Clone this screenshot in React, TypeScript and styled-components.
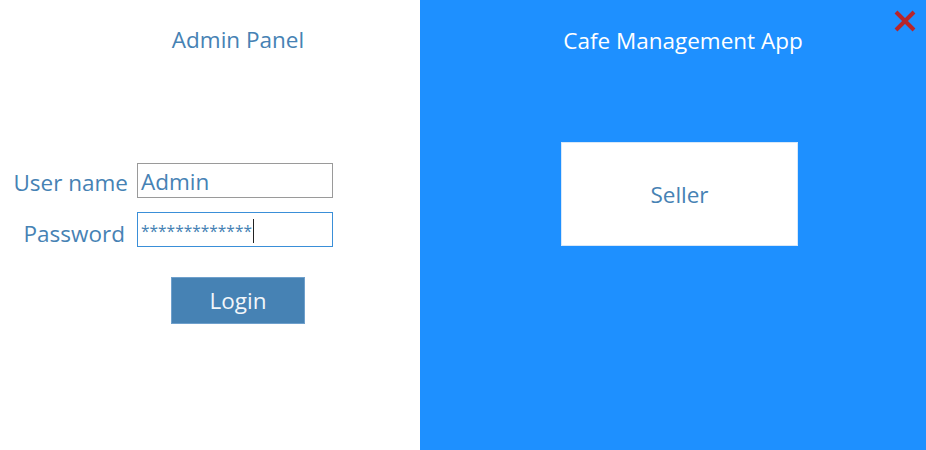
import React from "react";
import styled, { createGlobalStyle } from "styled-components";

const Global = createGlobalStyle`
  html, body { margin: 0; padding: 0; background: #ffffff; }
  body { font-family: "Open Sans", "Liberation Sans", Arial, sans-serif; }
  * { box-sizing: border-box; }
`;

const Frame = styled.div`
  display: flex;
  width: 926px;
  height: 450px;
  overflow: hidden;
`;

const LeftPanel = styled.div`
  width: 420px;
  background: #ffffff;
  display: flex;
  flex-direction: column;
  align-items: center;
  padding-top: 23px;
`;

const RightPanel = styled.div`
  position: relative;
  flex: 1;
  background: #1e90ff;
  display: flex;
  flex-direction: column;
  align-items: center;
  padding-top: 24px;
`;

const Title = styled.div<{ $light?: boolean }>`
  font-size: 22.5px;
  line-height: 34px;
  color: ${(p) => (p.$light ? "#ffffff" : "#4682b4")};
  margin-left: ${(p) => (p.$light ? "20px" : "56px")};
`;

const Form = styled.div`
  align-self: flex-start;
  display: grid;
  grid-template-columns: 128px 196px;
  grid-auto-rows: 35px;
  column-gap: 9px;
  row-gap: 14px;
  margin-top: 106px;
  align-items: center;
`;

const Label = styled.label<{ $pad?: number; $drop?: number }>`
  font-size: 22.5px;
  line-height: 24px;
  color: #4682b4;
  text-align: right;
  white-space: nowrap;
  padding-right: ${(p) => p.$pad ?? 0}px;
  padding-top: ${(p) => (p.$drop ?? 0) * 2}px;
`;

const Input = styled.div<{ $focused?: boolean }>`
  height: 35px;
  border: 1px solid ${(p) => (p.$focused ? "#3a8fd8" : "#9a9a9a")};
  background: #fff;
  display: flex;
  align-items: center;
  padding-left: 3px;
  padding-top: 2px;
  font-size: 22.5px;
  color: #4682b4;
`;

const Stars = styled.span`
  font-size: 15.5px;
  color: #4682b4;
  margin-top: 1px;
`;

const Caret = styled.span`
  display: inline-block;
  width: 1px;
  height: 24px;
  background: #222;
  margin-left: 1px;
`;

const LoginButton = styled.button`
  margin-top: 30px;
  margin-left: 56px;
  width: 134px;
  height: 47px;
  border: 1px solid #6fa0cc;
  background: #4682b4;
  color: #f2f6fa;
  font-family: inherit;
  font-size: 22.5px;
  cursor: pointer;
`;

const SellerCard = styled.div`
  margin-top: 84px;
  margin-left: 13px;
  width: 237px;
  height: 104px;
  background: #ffffff;
  border: 1px solid #d8e8f8;
  display: flex;
  align-items: center;
  justify-content: center;
  font-size: 22.5px;
  color: #4682b4;
`;

const Close = styled.div`
  position: absolute;
  top: 9px;
  right: 9px;
  width: 24px;
  height: 24px;
`;

export default function App() {
  return (
    <>
      <Global />
      <Frame>
        <LeftPanel>
          <Title>Admin Panel</Title>
          <Form>
            <Label $drop={2}>User name</Label>
            <Input>Admin</Input>
            <Label $pad={3} $drop={4}>Password</Label>
            <Input $focused>
              <Stars>*************</Stars>
              <Caret />
            </Input>
          </Form>
          <LoginButton>Login</LoginButton>
        </LeftPanel>
        <RightPanel>
          <Title $light>Cafe Management App</Title>
          <SellerCard>Seller</SellerCard>
          <Close>
            <svg width="24" height="24" viewBox="0 0 24 24">
              <path d="M3 3 L21 21 M21 3 L3 21" stroke="#b8252a" strokeWidth="4" strokeLinecap="butt" />
            </svg>
          </Close>
        </RightPanel>
      </Frame>
    </>
  );
}
